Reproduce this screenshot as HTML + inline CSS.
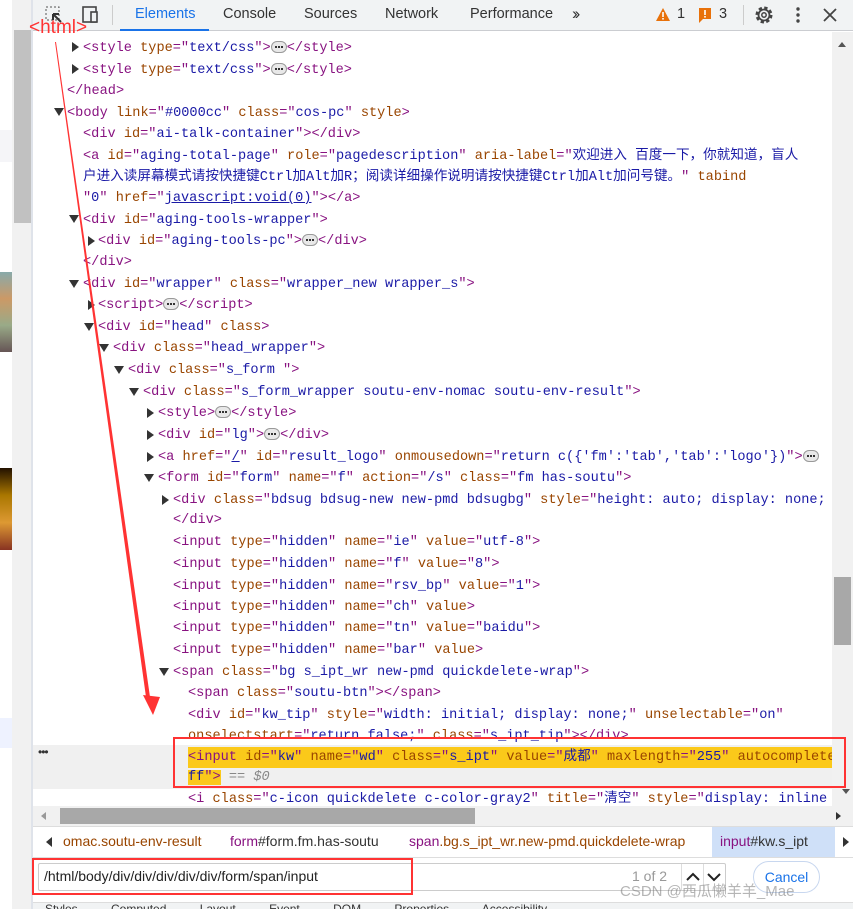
<!DOCTYPE html>
<html><head><meta charset="utf-8">
<style>
*{margin:0;padding:0;box-sizing:border-box}
body{width:853px;height:909px;overflow:hidden;background:#fff;position:relative;font-family:"Liberation Sans","Noto Sans CJK SC",sans-serif}
.mono{font-family:"Liberation Mono","Noto Sans CJK SC",monospace;font-size:13.6px}
.ln{position:absolute;white-space:nowrap;height:21px;line-height:21px}
.t{color:#881280}.a{color:#994500}.v{color:#1a1aa6}.k{color:#222}
.tri{position:absolute;width:0;height:0}
.down{border-left:5px solid transparent;border-right:5px solid transparent;border-top:8px solid #333}
.right{border-top:5px solid transparent;border-bottom:5px solid transparent;border-left:7px solid #333}
.dots{display:inline-block;width:16px;height:12px;border:1px solid #999;border-radius:6px;background:#e8e8e8;vertical-align:middle;position:relative}
.dots::after{content:"";position:absolute;left:3px;top:4px;width:2px;height:2px;background:#333;box-shadow:3px 0 #333,6px 0 #333}
</style></head><body>
<!-- left page strip -->
<div style="position:absolute;left:0;top:130px;width:12px;height:32px;background:#f5f5f8"></div>
<div style="position:absolute;left:0;top:272px;width:12px;height:80px;background:linear-gradient(#8aa,#c96,#9a8,#655)"></div>
<div style="position:absolute;left:0;top:468px;width:12px;height:82px;background:linear-gradient(#210,#a70,#d93,#832)"></div>
<div style="position:absolute;left:0;top:718px;width:12px;height:30px;background:#eef2ff"></div>
<div style="position:absolute;left:12px;top:0;width:19px;height:909px;background:#f1f1f1"></div>
<div style="position:absolute;left:14px;top:30px;width:17px;height:193px;background:#c1c1c1"></div>
<div style="position:absolute;left:31px;top:0;width:2px;height:909px;background:#dfe3ea"></div>
<!-- toolbar -->
<div style="position:absolute;left:33px;top:0;width:820px;height:31px;background:#f1f3f4;border-bottom:1px solid #cbcdd1"></div>
<svg style="position:absolute;left:44px;top:5px" width="20" height="20"><rect x="2" y="2" width="13" height="13" fill="none" stroke="#555" stroke-dasharray="2,2"/><path d="M9 9 L17 17 M9 9 L9 15 M9 9 L15 9" stroke="#333" stroke-width="2" fill="none"/></svg>
<svg style="position:absolute;left:79px;top:5px" width="22" height="20"><rect x="4" y="2" width="13" height="15" fill="none" stroke="#444" stroke-width="1.6"/><rect x="12" y="7" width="6" height="10" fill="#f1f3f4" stroke="#444" stroke-width="1.6"/></svg>
<div style="position:absolute;left:112px;top:5px;width:1px;height:20px;background:#ccc"></div>
<div style="position:absolute;top:6px;left:0;font-size:14.5px;color:#333;white-space:nowrap">
<span style="position:absolute;left:135px;color:#1a73e8">Elements</span>
<span style="position:absolute;left:223px">Console</span>
<span style="position:absolute;left:304px">Sources</span>
<span style="position:absolute;left:385px">Network</span>
<span style="position:absolute;left:470px">Performance</span>
<span style="position:absolute;left:572px;top:-2px;font-size:17px;letter-spacing:-3px">&#8250;&#8250;</span>
<span style="position:absolute;left:677px">1</span>
<span style="position:absolute;left:719px">3</span>
</div>
<div style="position:absolute;left:120px;top:29px;width:89px;height:2px;background:#1a73e8"></div>
<svg style="position:absolute;left:655px;top:7px" width="16" height="16"><path d="M8 1 L15 14 L1 14Z" fill="#e8710a"/><rect x="7.2" y="5" width="1.6" height="5" fill="#fff"/><rect x="7.2" y="11" width="1.6" height="1.6" fill="#fff"/></svg>
<svg style="position:absolute;left:697px;top:7px" width="16" height="17"><path d="M2 1 H14 V12 H6 L2 16Z" fill="#e8710a"/><rect x="7.2" y="3" width="1.6" height="5" fill="#fff"/><rect x="7.2" y="9" width="1.6" height="1.6" fill="#fff"/></svg>
<div style="position:absolute;left:743px;top:5px;width:1px;height:20px;background:#ccc"></div>
<svg style="position:absolute;left:753px;top:4px" width="22" height="22"><circle cx="11" cy="11" r="7" fill="none" stroke="#444" stroke-width="3" stroke-dasharray="3.2,2.3"/><circle cx="11" cy="11" r="5.5" fill="none" stroke="#444" stroke-width="1.8"/><circle cx="11" cy="11" r="2.2" fill="none" stroke="#444" stroke-width="1.5"/></svg>
<svg style="position:absolute;left:794px;top:6px" width="8" height="18"><circle cx="4" cy="3" r="1.7" fill="#444"/><circle cx="4" cy="9" r="1.7" fill="#444"/><circle cx="4" cy="15" r="1.7" fill="#444"/></svg>
<svg style="position:absolute;left:822px;top:7px" width="16" height="16"><path d="M2 2 L14 14 M14 2 L2 14" stroke="#444" stroke-width="1.8"/></svg>

<!-- right scrollbar -->
<div style="position:absolute;left:832px;top:32px;width:21px;height:776px;background:#f1f1f1"></div>
<div style="position:absolute;left:834px;top:577px;width:17px;height:68px;background:#a8a8a8"></div>
<div class="tri" style="left:838px;top:42px;border-left:4px solid transparent;border-right:4px solid transparent;border-bottom:5px solid #555"></div>
<div class="tri" style="left:842px;top:789px;border-left:4px solid transparent;border-right:4px solid transparent;border-top:5px solid #555"></div>

<!-- selected row -->
<div style="position:absolute;left:33px;top:745px;width:799px;height:44px;background:#f0f0f0"></div>
<div style="position:absolute;left:38px;top:745px;font-size:12px;color:#333;letter-spacing:-1px">•••</div>

<div class="mono">
<div class="tri right" style="left:72px;top:42px"></div>
<div class="ln" style="left:83px;top:38px"><span class="t">&lt;style</span> <span class="a">type</span><span class="t">="</span><span class="v">text/css</span><span class="t">"&gt;</span><span class="dots"></span><span class="t">&lt;/style&gt;</span></div>
<div class="tri right" style="left:72px;top:64px"></div>
<div class="ln" style="left:83px;top:60px"><span class="t">&lt;style</span> <span class="a">type</span><span class="t">="</span><span class="v">text/css</span><span class="t">"&gt;</span><span class="dots"></span><span class="t">&lt;/style&gt;</span></div>
<div class="ln" style="left:67px;top:81px"><span class="t">&lt;/head&gt;</span></div>
<div class="tri down" style="left:54px;top:108px"></div>
<div class="ln" style="left:67px;top:103px"><span class="t">&lt;body</span> <span class="a">link</span><span class="t">="</span><span class="v">#0000cc</span><span class="t">"</span> <span class="a">class</span><span class="t">="</span><span class="v">cos-pc</span><span class="t">"</span> <span class="a">style</span><span class="t">&gt;</span></div>
<div class="ln" style="left:83px;top:124px"><span class="t">&lt;div</span> <span class="a">id</span><span class="t">="</span><span class="v">ai-talk-container</span><span class="t">"&gt;&lt;/div&gt;</span></div>
<div class="ln" style="left:83px;top:146px"><span class="t">&lt;a</span> <span class="a">id</span><span class="t">="</span><span class="v">aging-total-page</span><span class="t">"</span> <span class="a">role</span><span class="t">="</span><span class="v">pagedescription</span><span class="t">"</span> <span class="a">aria-label</span><span class="t">="</span><span class="v">欢迎进入 百度一下，你就知道，盲人</span></div>
<div class="ln" style="left:83px;top:167px"><span class="v">户进入读屏幕模式请按快捷键Ctrl加Alt加R；阅读详细操作说明请按快捷键Ctrl加Alt加问号键。</span><span class="t">"</span> <span class="a">tabind</span></div>
<div class="ln" style="left:83px;top:188px"><span class="t">"</span><span class="v">0</span><span class="t">"</span> <span class="a">href</span><span class="t">="</span><span class="v" style="text-decoration:underline">javascript:void(0)</span><span class="t">"&gt;&lt;/a&gt;</span></div>
<div class="tri down" style="left:69px;top:215px"></div>
<div class="ln" style="left:83px;top:210px"><span class="t">&lt;div</span> <span class="a">id</span><span class="t">="</span><span class="v">aging-tools-wrapper</span><span class="t">"&gt;</span></div>
<div class="tri right" style="left:88px;top:236px"></div>
<div class="ln" style="left:98px;top:231px"><span class="t">&lt;div</span> <span class="a">id</span><span class="t">="</span><span class="v">aging-tools-pc</span><span class="t">"&gt;</span><span class="dots"></span><span class="t">&lt;/div&gt;</span></div>
<div class="ln" style="left:83px;top:252px"><span class="t">&lt;/div&gt;</span></div>
<div class="tri down" style="left:69px;top:280px"></div>
<div class="ln" style="left:83px;top:274px"><span class="t">&lt;div</span> <span class="a">id</span><span class="t">="</span><span class="v">wrapper</span><span class="t">"</span> <span class="a">class</span><span class="t">="</span><span class="v">wrapper_new wrapper_s</span><span class="t">"&gt;</span></div>
<div class="tri right" style="left:88px;top:300px"></div>
<div class="ln" style="left:98px;top:295px"><span class="t">&lt;script&gt;</span><span class="dots"></span><span class="t">&lt;/script&gt;</span></div>
<div class="tri down" style="left:84px;top:323px"></div>
<div class="ln" style="left:98px;top:317px"><span class="t">&lt;div</span> <span class="a">id</span><span class="t">="</span><span class="v">head</span><span class="t">"</span> <span class="a">class</span><span class="t">&gt;</span></div>
<div class="tri down" style="left:99px;top:344px"></div>
<div class="ln" style="left:113px;top:338px"><span class="t">&lt;div</span> <span class="a">class</span><span class="t">="</span><span class="v">head_wrapper</span><span class="t">"&gt;</span></div>
<div class="tri down" style="left:114px;top:366px"></div>
<div class="ln" style="left:128px;top:360px"><span class="t">&lt;div</span> <span class="a">class</span><span class="t">="</span><span class="v">s_form </span><span class="t">"&gt;</span></div>
<div class="tri down" style="left:129px;top:388px"></div>
<div class="ln" style="left:143px;top:382px"><span class="t">&lt;div</span> <span class="a">class</span><span class="t">="</span><span class="v">s_form_wrapper soutu-env-nomac soutu-env-result</span><span class="t">"&gt;</span></div>
<div class="tri right" style="left:147px;top:408px"></div>
<div class="ln" style="left:158px;top:403px"><span class="t">&lt;style&gt;</span><span class="dots"></span><span class="t">&lt;/style&gt;</span></div>
<div class="tri right" style="left:147px;top:430px"></div>
<div class="ln" style="left:158px;top:425px"><span class="t">&lt;div</span> <span class="a">id</span><span class="t">="</span><span class="v">lg</span><span class="t">"&gt;</span><span class="dots"></span><span class="t">&lt;/div&gt;</span></div>
<div class="tri right" style="left:147px;top:452px"></div>
<div class="ln" style="left:158px;top:447px"><span class="t">&lt;a</span> <span class="a">href</span><span class="t">="</span><span class="v" style="text-decoration:underline">/</span><span class="t">"</span> <span class="a">id</span><span class="t">="</span><span class="v">result_logo</span><span class="t">"</span> <span class="a">onmousedown</span><span class="t">="</span><span class="v">return c({'fm':'tab','tab':'logo'})</span><span class="t">"&gt;</span><span class="dots"></span></div>
<div class="tri down" style="left:144px;top:474px"></div>
<div class="ln" style="left:158px;top:468px"><span class="t">&lt;form</span> <span class="a">id</span><span class="t">="</span><span class="v">form</span><span class="t">"</span> <span class="a">name</span><span class="t">="</span><span class="v">f</span><span class="t">"</span> <span class="a">action</span><span class="t">="</span><span class="v">/s</span><span class="t">"</span> <span class="a">class</span><span class="t">="</span><span class="v">fm has-soutu</span><span class="t">"&gt;</span></div>
<div class="tri right" style="left:162px;top:495px"></div>
<div class="ln" style="left:173px;top:490px"><span class="t">&lt;div</span> <span class="a">class</span><span class="t">="</span><span class="v">bdsug bdsug-new new-pmd bdsugbg</span><span class="t">"</span> <span class="a">style</span><span class="t">="</span><span class="v">height: auto; display: none;</span></div>
<div class="ln" style="left:173px;top:510px"><span class="t">&lt;/div&gt;</span></div>
<div class="ln" style="left:173px;top:532px"><span class="t">&lt;input</span> <span class="a">type</span><span class="t">="</span><span class="v">hidden</span><span class="t">"</span> <span class="a">name</span><span class="t">="</span><span class="v">ie</span><span class="t">"</span> <span class="a">value</span><span class="t">="</span><span class="v">utf-8</span><span class="t">"&gt;</span></div>
<div class="ln" style="left:173px;top:554px"><span class="t">&lt;input</span> <span class="a">type</span><span class="t">="</span><span class="v">hidden</span><span class="t">"</span> <span class="a">name</span><span class="t">="</span><span class="v">f</span><span class="t">"</span> <span class="a">value</span><span class="t">="</span><span class="v">8</span><span class="t">"&gt;</span></div>
<div class="ln" style="left:173px;top:576px"><span class="t">&lt;input</span> <span class="a">type</span><span class="t">="</span><span class="v">hidden</span><span class="t">"</span> <span class="a">name</span><span class="t">="</span><span class="v">rsv_bp</span><span class="t">"</span> <span class="a">value</span><span class="t">="</span><span class="v">1</span><span class="t">"&gt;</span></div>
<div class="ln" style="left:173px;top:597px"><span class="t">&lt;input</span> <span class="a">type</span><span class="t">="</span><span class="v">hidden</span><span class="t">"</span> <span class="a">name</span><span class="t">="</span><span class="v">ch</span><span class="t">"</span> <span class="a">value</span><span class="t">&gt;</span></div>
<div class="ln" style="left:173px;top:618px"><span class="t">&lt;input</span> <span class="a">type</span><span class="t">="</span><span class="v">hidden</span><span class="t">"</span> <span class="a">name</span><span class="t">="</span><span class="v">tn</span><span class="t">"</span> <span class="a">value</span><span class="t">="</span><span class="v">baidu</span><span class="t">"&gt;</span></div>
<div class="ln" style="left:173px;top:640px"><span class="t">&lt;input</span> <span class="a">type</span><span class="t">="</span><span class="v">hidden</span><span class="t">"</span> <span class="a">name</span><span class="t">="</span><span class="v">bar</span><span class="t">"</span> <span class="a">value</span><span class="t">&gt;</span></div>
<div class="tri down" style="left:159px;top:668px"></div>
<div class="ln" style="left:173px;top:662px"><span class="t">&lt;span</span> <span class="a">class</span><span class="t">="</span><span class="v">bg s_ipt_wr new-pmd quickdelete-wrap</span><span class="t">"&gt;</span></div>
<div class="ln" style="left:188px;top:683px"><span class="t">&lt;span</span> <span class="a">class</span><span class="t">="</span><span class="v">soutu-btn</span><span class="t">"&gt;&lt;/span&gt;</span></div>
<div class="ln" style="left:188px;top:705px"><span class="t">&lt;div</span> <span class="a">id</span><span class="t">="</span><span class="v">kw_tip</span><span class="t">"</span> <span class="a">style</span><span class="t">="</span><span class="v">width: initial; display: none;</span><span class="t">"</span> <span class="a">unselectable</span><span class="t">="</span><span class="v">on</span><span class="t">"</span></div>
<div class="ln" style="left:188px;top:726px"><span class="a">onselectstart</span><span class="t">="</span><span class="v">return false;</span><span class="t">"</span> <span class="a">class</span><span class="t">="</span><span class="v">s_ipt_tip</span><span class="t">"&gt;&lt;/div&gt;</span></div>
<div class="ln" style="left:188px;top:747px;background:#fbc91a;width:644px;overflow:hidden"><span class="t">&lt;input</span> <span class="a">id</span><span class="t">="</span><span class="v">kw</span><span class="t">"</span> <span class="a">name</span><span class="t">="</span><span class="v">wd</span><span class="t">"</span> <span class="a">class</span><span class="t">="</span><span class="v">s_ipt</span><span class="t">"</span> <span class="a">value</span><span class="t">="</span><span class="v">成都</span><span class="t">"</span> <span class="a">maxlength</span><span class="t">="</span><span class="v">255</span><span class="t">"</span> <span class="a">autocomplete</span></div>
<div class="ln" style="left:188px;top:767px"><span style="background:#fbc91a"><span class="v">ff</span><span class="t">"&gt;</span></span> <span style="color:#888">== <i>$0</i></span></div>
<div class="ln" style="left:188px;top:789px"><span class="t">&lt;i</span> <span class="a">class</span><span class="t">="</span><span class="v">c-icon quickdelete c-color-gray2</span><span class="t">"</span> <span class="a">title</span><span class="t">="</span><span class="v">清空</span><span class="t">"</span> <span class="a">style</span><span class="t">="</span><span class="v">display: inline</span></div>
</div>

<!-- h scrollbar -->
<div style="position:absolute;left:33px;top:806px;width:820px;height:20px;background:#f1f1f1"></div>
<div style="position:absolute;left:60px;top:808px;width:415px;height:16px;background:#a8a8a8"></div>
<div class="tri" style="left:41px;top:812px;border-top:4px solid transparent;border-bottom:4px solid transparent;border-right:5px solid #999"></div>
<div class="tri" style="left:836px;top:812px;border-top:4px solid transparent;border-bottom:4px solid transparent;border-left:5px solid #333"></div>

<!-- breadcrumb -->
<div style="position:absolute;left:33px;top:826px;width:820px;height:32px;background:#fff;border-top:1px solid #ddd;border-bottom:1px solid #ddd"></div>
<div style="position:absolute;left:712px;top:827px;width:123px;height:30px;background:#cfe0f8"></div>
<div class="tri" style="left:46px;top:837px;border-top:5px solid transparent;border-bottom:5px solid transparent;border-right:6px solid #333"></div>
<div class="tri" style="left:843px;top:837px;border-top:5px solid transparent;border-bottom:5px solid transparent;border-left:6px solid #333"></div>
<div style="position:absolute;top:833px;left:0;font-size:14px;white-space:nowrap">
<span style="position:absolute;left:63px;color:#994500">omac.soutu-env-result</span>
<span style="position:absolute;left:230px;color:#333"><span style="color:#881280">form</span>#form.fm.has-soutu</span>
<span style="position:absolute;left:409px;color:#881280">span<span style="color:#994500">.bg.s_ipt_wr.new-pmd.quickdelete-wrap</span></span>
<span style="position:absolute;left:720px;color:#333"><span style="color:#881280">input</span>#kw.s_ipt</span>
</div>

<!-- search bar -->
<div style="position:absolute;left:33px;top:858px;width:820px;height:44px;background:#fff"></div>
<div style="position:absolute;left:38px;top:863px;width:688px;height:28px;border:1px solid #ccc;border-radius:2px"></div>
<div style="position:absolute;left:44px;top:868px;font-size:14px;color:#222">/html/body/div/div/div/div/div/form/span/input</div>
<div style="position:absolute;left:632px;top:868px;font-size:14px;color:#999">1 of 2</div>
<div style="position:absolute;left:681px;top:864px;width:1px;height:26px;background:#ddd"></div>
<div style="position:absolute;left:703px;top:864px;width:1px;height:26px;background:#ddd"></div>
<svg style="position:absolute;left:684px;top:870px" width="40" height="14"><path d="M3 10 L9 4 L15 10" stroke="#222" stroke-width="2" fill="none"/><path d="M24 4 L30 10 L36 4" stroke="#222" stroke-width="2" fill="none"/></svg>
<div style="position:absolute;left:753px;top:861px;width:67px;height:32px;border:1px solid #c8d7ef;border-radius:16px;color:#1a73e8;font-size:14px;text-align:center;line-height:30px">Cancel</div>
<div style="position:absolute;left:620px;top:880px;font-size:15px;color:rgba(120,120,120,0.55);white-space:nowrap">CSDN @西瓜懒羊羊_Mae</div>
<div style="position:absolute;left:33px;top:902px;width:820px;height:7px;background:#f1f3f4;border-top:1px solid #ddd;overflow:hidden"><div style="font-size:12px;color:#333;margin-left:12px;margin-top:-1px;white-space:nowrap;word-spacing:30px">Styles Computed Layout Event DOM Properties Accessibility</div></div>

<!-- red boxes -->
<div style="position:absolute;left:173px;top:737px;width:673px;height:51px;border:2px solid #f33"></div>
<div style="position:absolute;left:32px;top:858px;width:381px;height:37px;border:2px solid #f33"></div>

<!-- red annotation -->
<div style="position:absolute;left:29px;top:17px;font-size:19px;color:#f33;line-height:22px">&lt;html&gt;</div>
<svg style="position:absolute;left:0;top:0" width="853" height="909">
<polygon points="55,42 56,42 150,697 146,697" fill="#f33"/>
<polygon points="143,695 160,697 153,715" fill="#f33"/>
</svg>
</body></html>
